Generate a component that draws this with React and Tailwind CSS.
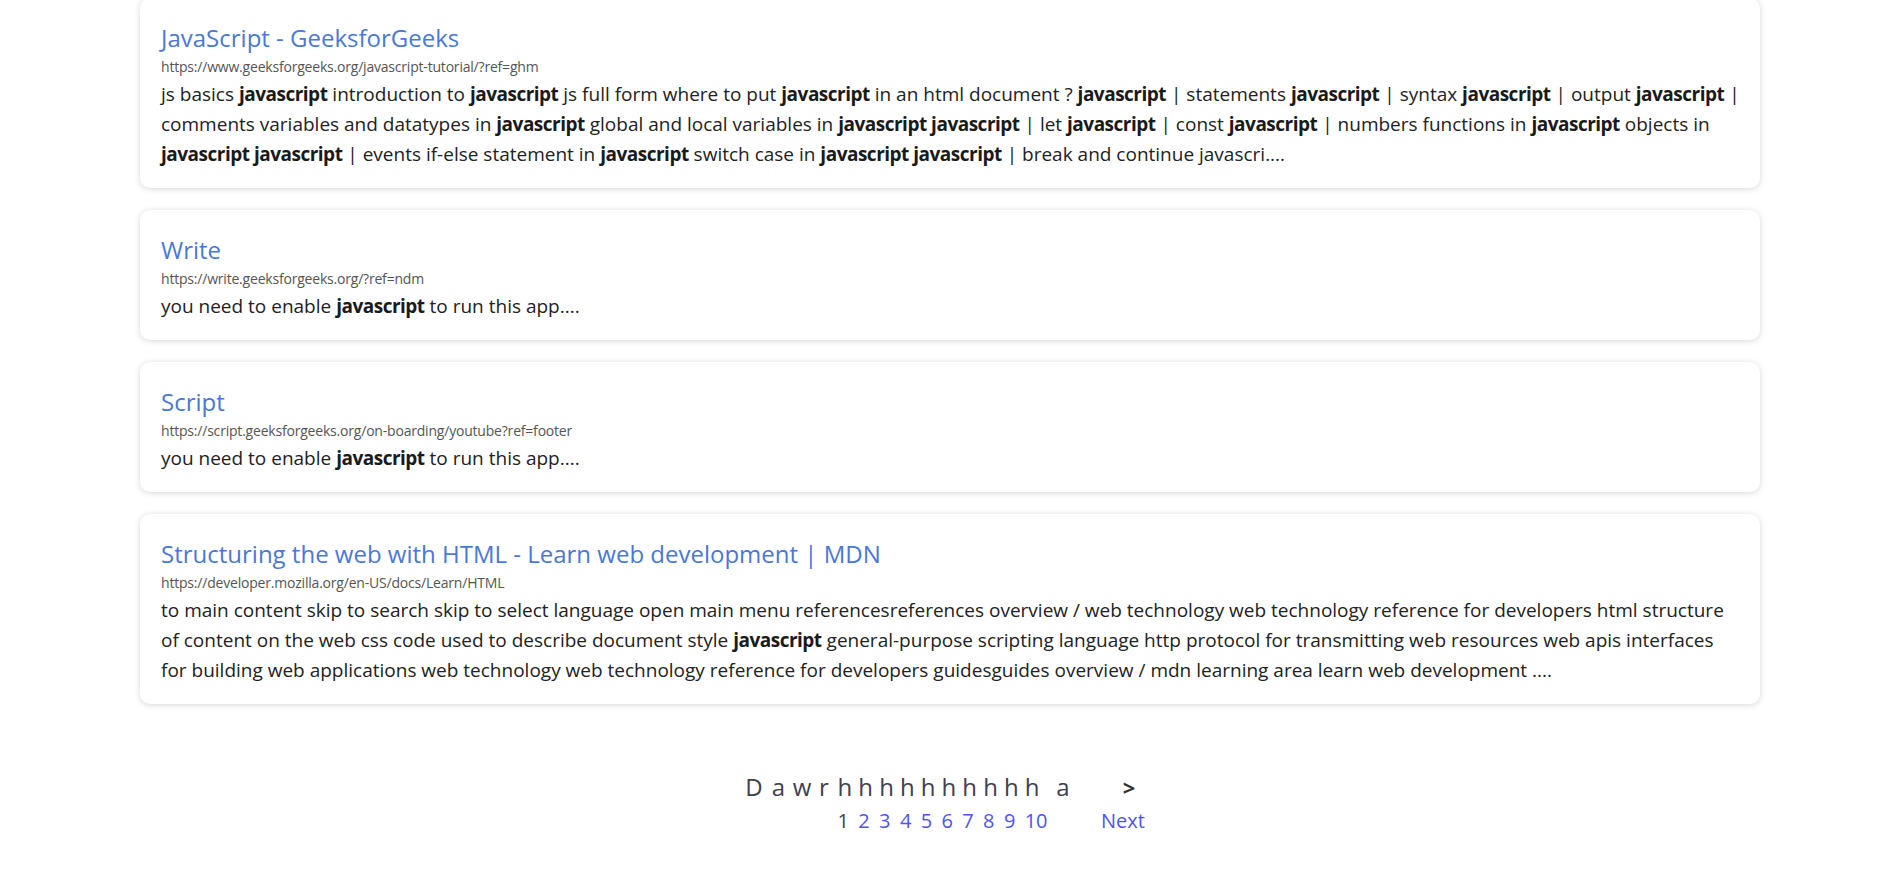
import React from 'react';

const results = [
  {
    title: 'JavaScript - GeeksforGeeks',
    url: 'https://www.geeksforgeeks.org/javascript-tutorial/?ref=ghm',
    lines: [
      'js basics **javascript** introduction to **javascript** js full form where to put **javascript** in an html document ? **javascript** | statements **javascript** | syntax **javascript** | output **javascript** |',
      'comments variables and datatypes in **javascript** global and local variables in **javascript javascript** | let **javascript** | const **javascript** | numbers functions in **javascript** objects in',
      '**javascript javascript** | events if-else statement in **javascript** switch case in **javascript javascript** | break and continue javascri....',
    ],
  },
  {
    title: 'Write',
    url: 'https://write.geeksforgeeks.org/?ref=ndm',
    lines: ['you need to enable **javascript** to run this app....'],
  },
  {
    title: 'Script',
    url: 'https://script.geeksforgeeks.org/on-boarding/youtube?ref=footer',
    lines: ['you need to enable **javascript** to run this app....'],
  },
  {
    title: 'Structuring the web with HTML - Learn web development | MDN',
    url: 'https://developer.mozilla.org/en-US/docs/Learn/HTML',
    lines: [
      'to main content skip to search skip to select language open main menu referencesreferences overview / web technology web technology reference for developers html structure',
      'of content on the web css code used to describe document style **javascript** general-purpose scripting language http protocol for transmitting web resources web apis interfaces',
      'for building web applications web technology web technology reference for developers guidesguides overview / mdn learning area learn web development ....',
    ],
  },
];

// "**word**" marks the highlighted search term
const renderLine = (line) =>
  line.split('**').map((part, i) =>
    i % 2 === 1 ? (
      <b key={i} className="font-bold text-[#1a1a1a] tracking-[-0.5px]">{part}</b>
    ) : (
      <span key={i}>{part}</span>
    )
  );

const ResultCard = ({ result }) => (
  <div className="rounded-[10px] bg-white pt-[25px] pb-[19px] px-[21px] shadow-[0_1px_6px_rgba(0,0,0,0.16)]">
    <a href="#" className="block text-[24px] leading-[30px] text-[#4a78d6] whitespace-nowrap">
      {result.title}
    </a>
    <div className="mt-[3px] text-[14px] leading-[22px] text-[#555] tracking-[-0.2px]">{result.url}</div>
    <p className="mt-[1px] text-[19px] leading-[30px] text-[#222]">
      {result.lines.map((line, i) => (
        <span key={i} className="block whitespace-nowrap">
          {renderLine(line)}
        </span>
      ))}
    </p>
  </div>
);

const letters = [
  { ch: 'D', w: 'w-[25px]' },
  { ch: 'a', w: 'w-[24px]' },
  { ch: 'w', w: 'w-[23px]' },
  { ch: 'r', w: 'w-[21px]' },
];

const Pagination = () => (
  <div className="flex justify-center mt-[68px]">
    <div className="flex mr-[-27px]">
      {letters.map((l) => (
        <div key={l.ch} className={`${l.w} flex flex-col items-center`}>
          <span className="h-[30px] text-[24px] leading-[30px] text-[#40404f]">{l.ch}</span>
        </div>
      ))}
      {Array.from({ length: 10 }, (_, i) => (
        <div key={i} className="w-[20.8px] flex flex-col items-center">
          <span className="h-[30px] text-[24px] leading-[30px] text-[#40404f]">h</span>
          <a
            href="#"
            className={`self-start pl-[3px] mt-[5px] text-[20px] leading-[28px] whitespace-nowrap ${i === 0 ? 'text-[#444]' : 'text-[#5252f5]'}`}
          >
            {i + 1}
          </a>
        </div>
      ))}
      <div className="w-[41px] flex flex-col items-center">
        <span className="h-[30px] text-[24px] leading-[30px] text-[#40404f]">a</span>
      </div>
      <div className="w-[85px] flex flex-col items-center">
        <span className="h-[30px] text-[22px] leading-[30px] font-bold text-[#333] pl-[6px]">&gt;</span>
        <a href="#" className="mt-[5px] text-[20px] leading-[28px] text-[#5252f5] pr-[6px]">Next</a>
      </div>
    </div>
  </div>
);

export default function App() {
  return (
    <div className="min-h-[892px] bg-white font-['Open_Sans',sans-serif] overflow-hidden">
      <div className="ml-[140px] w-[1620px] mt-[-2px] flex flex-col gap-[22px]">
        {results.map((r) => (
          <ResultCard key={r.url} result={r} />
        ))}
      </div>
      <Pagination />
    </div>
  );
}
